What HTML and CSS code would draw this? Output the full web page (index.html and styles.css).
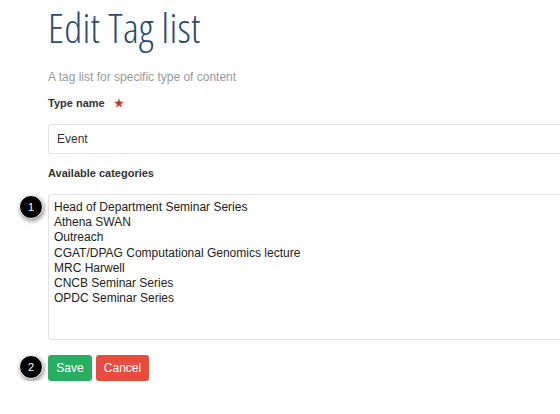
FILE: index.html
```html
<!DOCTYPE html>
<html>
<head>
<meta charset="utf-8">
<link rel="stylesheet" href="styles.css">
</head>
<body>
<div class="page">
  <h1 class="title">Edit Tag list</h1>
  <p class="lead">A tag list for specific type of content</p>
  <div class="field">
    <label class="label">Type name <span class="req">&#9733;</span></label>
    <div class="input">Event</div>
  </div>
  <div class="field">
    <label class="label">Available categories</label>
    <div class="textarea-wrap">
      <span class="badge badge-1">1</span>
      <div class="textarea">
        <div>Head of Department Seminar Series</div>
        <div>Athena SWAN</div>
        <div>Outreach</div>
        <div>CGAT/DPAG Computational Genomics lecture</div>
        <div>MRC Harwell</div>
        <div>CNCB Seminar Series</div>
        <div>OPDC Seminar Series</div>
      </div>
    </div>
  </div>
  <div class="actions">
    <span class="badge badge-2">2</span>
    <button class="btn btn-save">Save</button>
    <button class="btn btn-cancel">Cancel</button>
  </div>
</div>
</body>
</html>
```
FILE: styles.css
```css
html, body {
  margin: 0;
  padding: 0;
  background: #fff;
  overflow: hidden;
}
body {
  font-family: "Liberation Sans", Arial, sans-serif;
  color: #333;
}
.page {
  padding-left: 48px;
  width: 560px;
  box-sizing: border-box;
}
.title {
  margin: 0;
  padding-top: 2px;
  font-family: "Open Sans", sans-serif;
  font-weight: 300;
  font-stretch: 75%;
  font-size: 41px;
  line-height: 50px;
  letter-spacing: 0.3px;
  color: #2a4a6e;
}
.lead {
  margin: 18px 0 0 0;
  font-size: 12px;
  line-height: 14px;
  color: #999;
}
.field {
  margin-top: 12px;
}
.label {
  display: block;
  font-size: 11px;
  font-weight: bold;
  line-height: 14px;
  color: #333;
}
.req {
  color: #c0392b;
  margin-left: 6px;
  font-size: 11px;
}
.input {
  margin-top: 14px;
  height: 28px;
  border: 1px solid #e3e3e3;
  border-right: none;
  border-radius: 3px 0 0 3px;
  padding-left: 8px;
  font-size: 12px;
  line-height: 28px;
  color: #333;
}
.textarea-wrap {
  position: relative;
  margin-top: 14px;
}
.textarea {
  height: 146px;
  border: 1px solid #e3e3e3;
  border-right: none;
  border-radius: 3px 0 0 3px;
  padding: 5px 0 0 5px;
  box-sizing: border-box;
  font-size: 12px;
  line-height: 15.2px;
  color: #222;
}
.badge {
  position: absolute;
  width: 22px;
  height: 22px;
  border-radius: 50%;
  background: #000;
  color: #fff;
  font-size: 11px;
  line-height: 22px;
  text-align: center;
  box-shadow: 1px 2px 4px rgba(0,0,0,0.45);
  border: 1px solid #fff;
}
.badge-1 {
  left: -29px;
  top: 1px;
}
.actions {
  position: relative;
  margin-top: 15px;
  display: flex;
  gap: 4px;
}
.badge-2 {
  left: -29px;
  top: 0px;
}
.btn {
  height: 26px;
  border: none;
  border-radius: 3px;
  color: #fff;
  font-family: "Liberation Sans", Arial, sans-serif;
  font-size: 12px;
  padding: 0;
}
.btn-save {
  width: 44px;
  background: #27ae60;
}
.btn-cancel {
  width: 53px;
  background: #e74c3c;
}
```
